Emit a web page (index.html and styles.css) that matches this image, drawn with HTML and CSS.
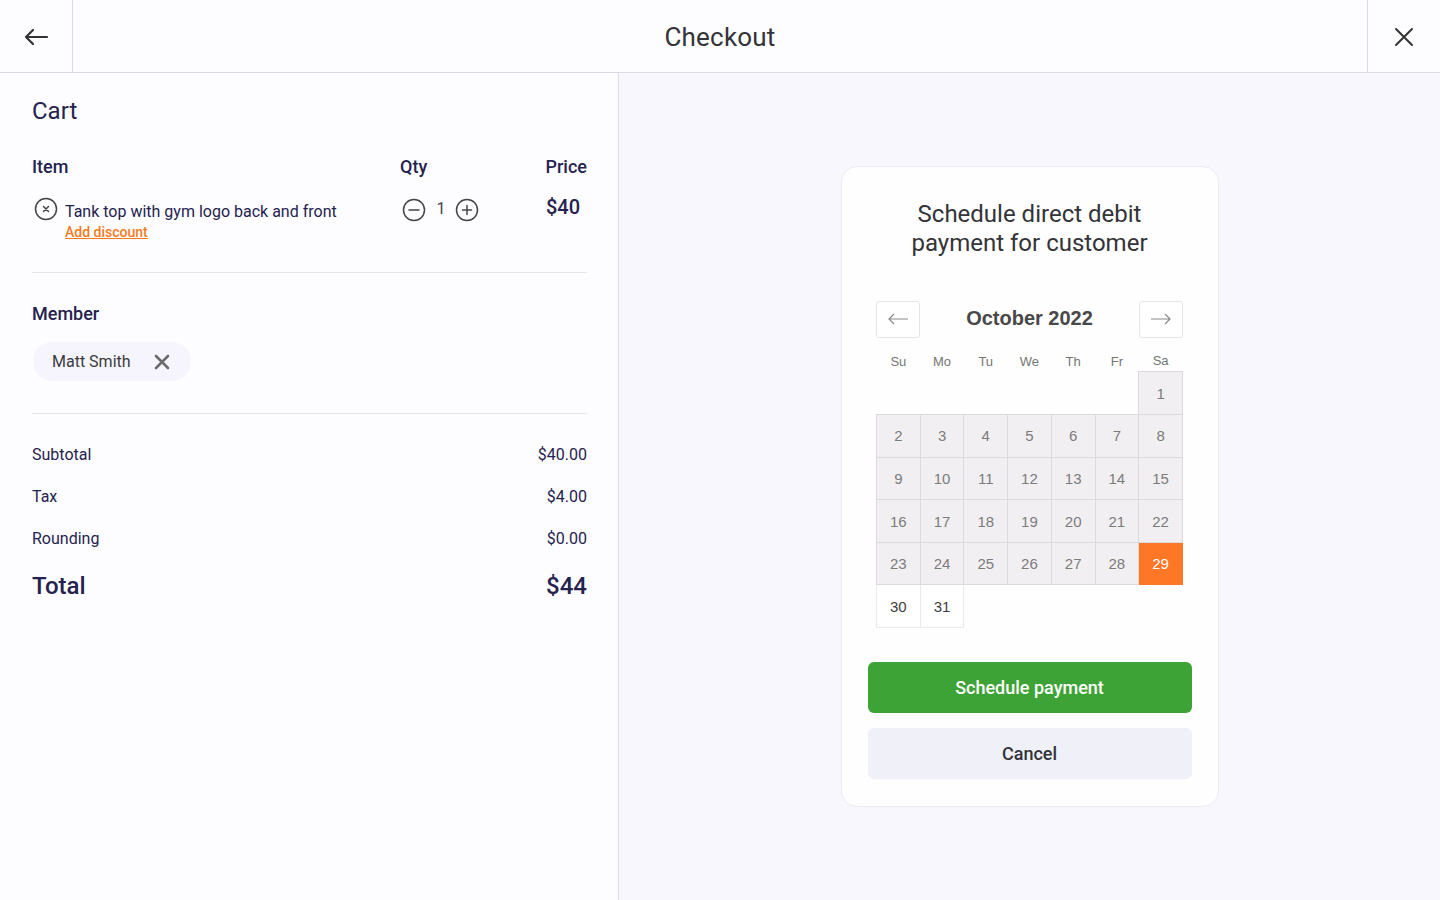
FILE: index.html
```html
<!DOCTYPE html>
<html lang="en">
<head>
<meta charset="utf-8">
<title>Checkout</title>
<link rel="stylesheet" href="styles.css">
</head>
<body>
<div class="app">
  <header class="topbar">
    <button class="icon-btn back" aria-label="Back">
      <svg width="26" height="20" viewBox="0 0 26 20"><path d="M24 10H3M10 3L3 10l7 7" fill="none" stroke="#333" stroke-width="2.2" stroke-linecap="round" stroke-linejoin="round"/></svg>
    </button>
    <h1 class="title">Checkout</h1>
    <button class="icon-btn close" aria-label="Close">
      <svg width="20" height="20" viewBox="0 0 20 20"><path d="M2 2l16 16M18 2L2 18" fill="none" stroke="#333" stroke-width="2" stroke-linecap="round"/></svg>
    </button>
  </header>
  <main class="body">
    <section class="cart">
      <h2 class="cart-title">Cart</h2>
      <div class="items">
        <div class="items-head">
          <span class="col-item">Item</span>
          <span class="col-qty">Qty</span>
          <span class="col-price">Price</span>
        </div>
        <div class="item-row">
          <div class="col-item item-info">
            <svg class="remove" width="24" height="24" viewBox="0 0 24 24"><circle cx="12" cy="12" r="10.5" fill="none" stroke="#444" stroke-width="1.5"/><path d="M9.5 9.5l5 5M14.5 9.5l-5 5" stroke="#444" stroke-width="1.5" stroke-linecap="round"/></svg>
            <div class="item-text">
              <div class="item-name">Tank top with gym logo back and front</div>
              <a class="discount" href="#">Add discount</a>
            </div>
          </div>
          <div class="col-qty qty">
            <svg width="24" height="24" viewBox="0 0 24 24"><circle cx="12" cy="12" r="10.5" fill="none" stroke="#444" stroke-width="1.5"/><path d="M7 12h10" stroke="#444" stroke-width="1.5" stroke-linecap="round"/></svg>
            <span class="qty-num">1</span>
            <svg width="24" height="24" viewBox="0 0 24 24"><circle cx="12" cy="12" r="10.5" fill="none" stroke="#444" stroke-width="1.5"/><path d="M7.5 12h9M12 7.5v9" stroke="#444" stroke-width="1.5" stroke-linecap="round"/></svg>
          </div>
          <div class="col-price price">$40</div>
        </div>
      </div>
      <div class="member">
        <h3 class="section-label">Member</h3>
        <div class="chip">
          <span>Matt Smith</span>
          <svg width="16" height="16" viewBox="0 0 16 16"><path d="M2 2l12 12M14 2L2 14" stroke="#6b6b6b" stroke-width="2.6" stroke-linecap="round"/></svg>
        </div>
      </div>
      <div class="totals">
        <div class="line"><span>Subtotal</span><span>$40.00</span></div>
        <div class="line"><span>Tax</span><span>$4.00</span></div>
        <div class="line"><span>Rounding</span><span>$0.00</span></div>
        <div class="line total"><span>Total</span><span>$44</span></div>
      </div>
    </section>
    <section class="side">
      <div class="card">
        <h2 class="card-title">Schedule direct debit<br>payment for customer</h2>
        <div class="calendar">
          <div class="cal-nav">
            <button class="nav-btn" aria-label="Previous month">
              <svg width="22" height="12" viewBox="0 0 22 12"><path d="M21 6H2M7 1L2 6l5 5" fill="none" stroke="#8a8a8a" stroke-width="1.2"/></svg>
            </button>
            <div class="month">October 2022</div>
            <button class="nav-btn" aria-label="Next month">
              <svg width="22" height="12" viewBox="0 0 22 12"><path d="M1 6h19M15 1l5 5-5 5" fill="none" stroke="#8a8a8a" stroke-width="1.2"/></svg>
            </button>
          </div>
          <table class="cal-grid">
            <thead>
              <tr><th>Su</th><th>Mo</th><th>Tu</th><th>We</th><th>Th</th><th>Fr</th><th>Sa</th></tr>
            </thead>
            <tbody>
              <tr><td class="empty"></td><td class="empty"></td><td class="empty"></td><td class="empty"></td><td class="empty"></td><td class="empty"></td><td class="off">1</td></tr>
              <tr><td class="off">2</td><td class="off">3</td><td class="off">4</td><td class="off">5</td><td class="off">6</td><td class="off">7</td><td class="off">8</td></tr>
              <tr><td class="off">9</td><td class="off">10</td><td class="off">11</td><td class="off">12</td><td class="off">13</td><td class="off">14</td><td class="off">15</td></tr>
              <tr><td class="off">16</td><td class="off">17</td><td class="off">18</td><td class="off">19</td><td class="off">20</td><td class="off">21</td><td class="off">22</td></tr>
              <tr><td class="off">23</td><td class="off">24</td><td class="off">25</td><td class="off">26</td><td class="off">27</td><td class="off">28</td><td class="sel">29</td></tr>
              <tr><td class="on">30</td><td class="on">31</td><td class="empty"></td><td class="empty"></td><td class="empty"></td><td class="empty"></td><td class="empty"></td></tr>
            </tbody>
          </table>
        </div>
        <div class="actions">
          <button class="btn primary">Schedule payment</button>
          <button class="btn secondary">Cancel</button>
        </div>
      </div>
    </section>
  </main>
</div>
</body>
</html>
```

FILE: styles.css
```css
* { box-sizing: border-box; }
html, body { margin: 0; padding: 0; }
body {
  font-family: Roboto, "Noto Sans", "Liberation Sans", sans-serif;
  background: #fdfdff;
  color: #25224f;
}
button { font-family: inherit; cursor: pointer; }

.app { display: flex; flex-direction: column; width: 1440px; height: 900px; }

.topbar {
  height: 73px;
  flex: none;
  display: flex;
  align-items: stretch;
  border-bottom: 1px solid #dddae6;
  background: #fdfdff;
}
.icon-btn {
  width: 73px;
  border: none;
  background: transparent;
  display: flex;
  align-items: center;
  justify-content: center;
  padding: 0;
}
.icon-btn.back { border-right: 1px solid #dddae6; padding-right: 1px; padding-top: 2px; }
.icon-btn.close { border-left: 1px solid #dddae6; padding-top: 2px; }
.title {
  flex: 1;
  margin: 0;
  padding-top: 1px;
  text-align: center;
  font-size: 26px;
  font-weight: 400;
  color: #333338;
  line-height: 72px;
  letter-spacing: 0.2px;
}

.body { flex: 1; display: flex; }

.cart {
  width: 619px;
  flex: none;
  border-right: 1px solid #dddae6;
  padding: 24px 31px 0 32px;
  background: #fdfdff;
}
.cart-title {
  margin: 0;
  font-size: 24px;
  font-weight: 400;
  line-height: 28px;
  color: #25224f;
}
.items { margin-top: 31px; padding-bottom: 31px; border-bottom: 1px solid #e6e4ec; }
.items-head, .item-row {
  display: grid;
  grid-template-columns: 1fr 90px 100px;
}
.items-head {
  font-size: 18px;
  font-weight: 500;
  line-height: 22px;
}
.col-qty { padding-left: 3px; }
.col-price { text-align: right; }
.item-row { margin-top: 21px; }
.item-info { display: flex; gap: 7px; align-items: flex-start; padding-left: 2px; }
.remove { flex: none; margin-top: -2px; }
.item-name { font-size: 16px; line-height: 20px; padding-top: 3px; color: #25224f; }
.discount {
  display: inline-block;
  font-size: 14px;
  line-height: 16px;
  color: #fa7a1e;
  font-weight: 500;
  text-decoration: underline;
  margin-top: 1px;
}
.qty { display: flex; align-items: flex-start; gap: 0; margin-left: 2px; margin-top: -1px; }
.qty-num { font-size: 16px; width: 29px; text-align: center; line-height: 22px; color: #444; padding-left: 1px; }
.price {
  font-size: 20px;
  font-weight: 500;
  line-height: 24px;
  padding-right: 7px;
  margin-top: -4px;
}

.member { padding: 30px 0 32px; border-bottom: 1px solid #e6e4ec; }
.section-label { margin: 0; font-size: 18px; font-weight: 500; line-height: 22px; }
.chip {
  margin-top: 17px;
  margin-left: 1px;
  display: inline-flex;
  align-items: center;
  gap: 23px;
  height: 39px;
  padding: 0 21px 0 19px;
  border-radius: 20px;
  background: #f6f5fd;
  font-size: 16px;
  color: #3a3a3e;
}

.totals { padding-top: 31px; }
.line {
  display: flex;
  justify-content: space-between;
  font-size: 16px;
  line-height: 20px;
  margin-bottom: 22px;
  color: #25224f;
}
.line.total {
  font-size: 24px;
  font-weight: 500;
  line-height: 30px;
  margin-top: 19px;
}

.side {
  flex: 1;
  background: #f8f7fe;
  display: flex;
  align-items: center;
  justify-content: center;
}
.card {
  width: 378px;
  background: #fefefe;
  border: 1px solid #ecebf3;
  border-radius: 16px;
  padding: 33px 26px 27px 26px;
}
.card-title {
  margin: 0;
  text-align: center;
  font-size: 24px;
  font-weight: 400;
  line-height: 29px;
  color: #333338;
}

.calendar { width: 307px; margin: 43px auto 0; font-family: "Liberation Sans", Arial, sans-serif; }
.cal-nav { display: flex; align-items: center; justify-content: space-between; }
.nav-btn {
  width: 44px;
  height: 37px;
  background: #fff;
  border: 1px solid #e6e6e6;
  border-radius: 3px;
  display: flex;
  align-items: center;
  justify-content: center;
  padding: 0;
}
.month { font-size: 20px; font-weight: 700; color: #484848; margin-top: -2px; }
.cal-grid {
  width: 307px;
  border-collapse: collapse;
  table-layout: fixed;
  margin-top: 0;
}
.cal-grid th {
  font-size: 13px;
  font-weight: 400;
  color: #757575;
  height: 34px;
  vertical-align: bottom;
  padding: 0 0 3px;
}
.cal-grid td {
  height: 42.6px;
  text-align: center;
  font-size: 15px;
  padding: 0;
}
.cal-grid td.off { background: #f1eff2; border: 1px solid #dcdadf; color: #7c7c7c; }
.cal-grid td.sel { background: #fd7726; border: 1px solid #fd7726; color: #fff; }
.cal-grid td.on { background: #fff; border: 1px solid #eaeaea; color: #404040; }
.cal-grid td.empty { border: none; background: transparent; }

.actions { margin-top: 34px; display: flex; flex-direction: column; gap: 15px; }
.btn {
  height: 51px;
  border: none;
  border-radius: 6px;
  font-size: 18px;
  font-weight: 500;
}
.btn.primary { background: #3ea336; color: #fff; }
.btn.secondary { background: #eff0f8; color: #333338; }
```
